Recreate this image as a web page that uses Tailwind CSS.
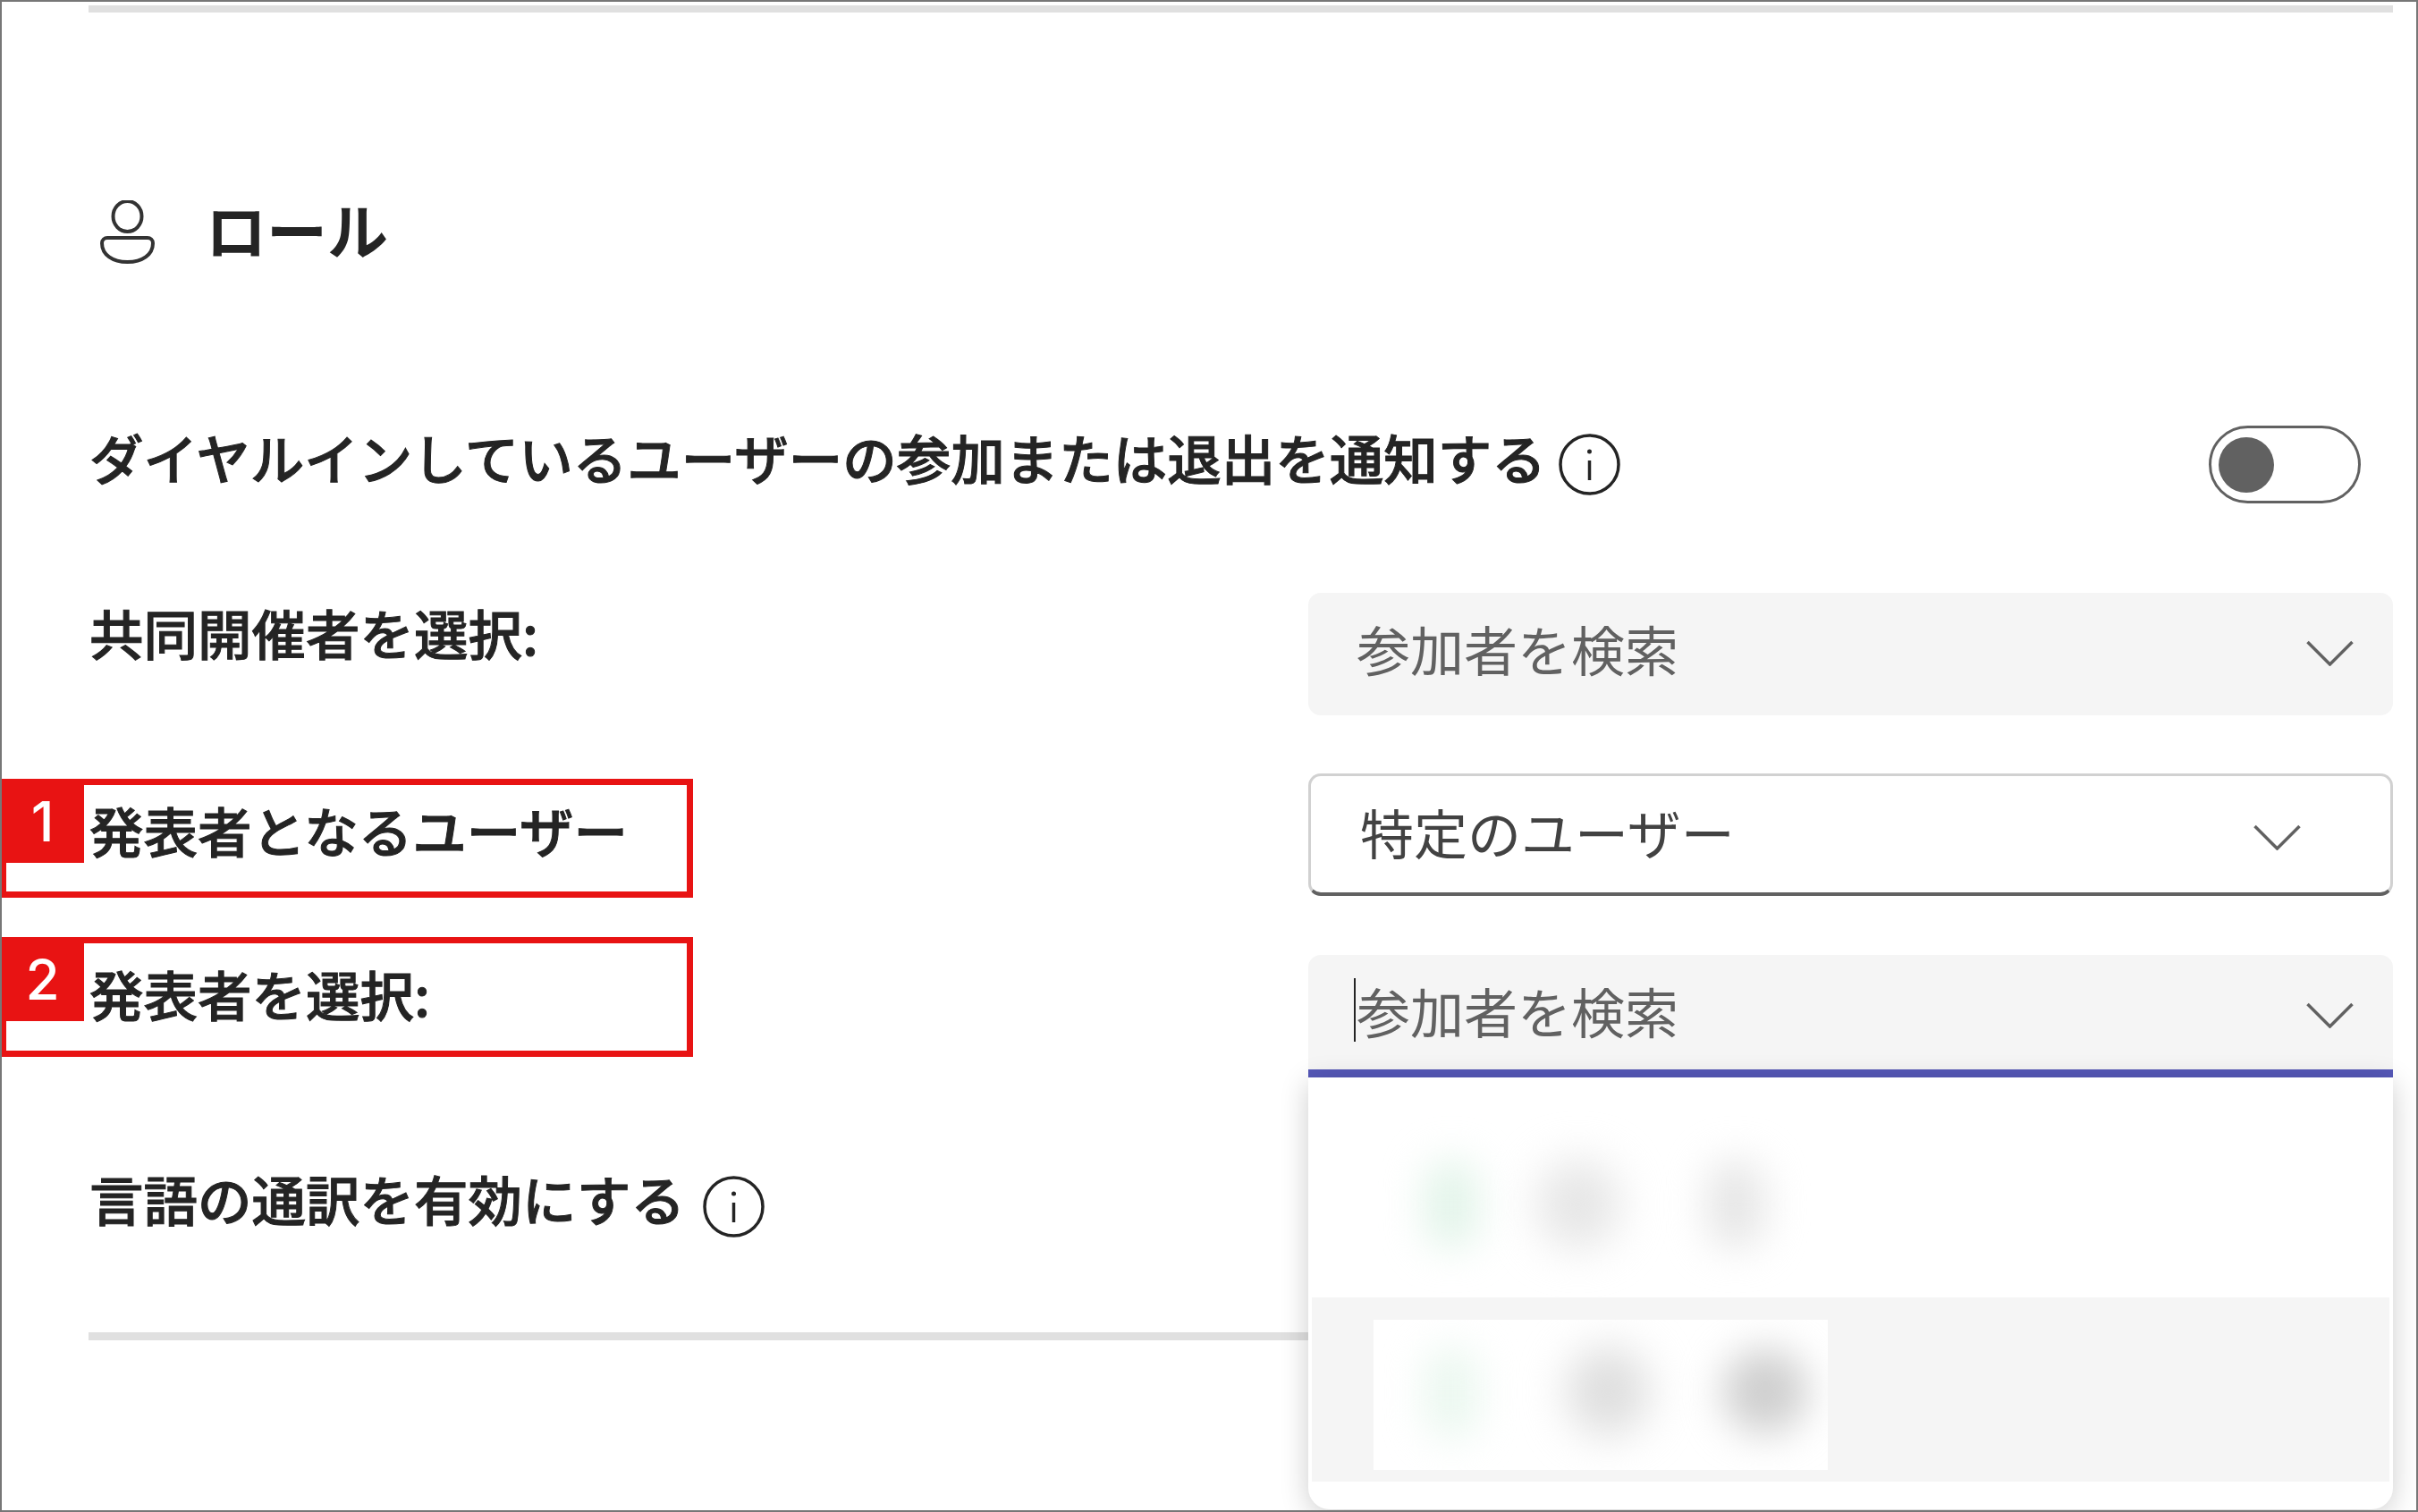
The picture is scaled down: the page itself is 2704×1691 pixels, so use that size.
<!DOCTYPE html>
<html lang="ja">
<head>
<meta charset="UTF-8">
<title>ロール</title>
<script src="https://cdn.jsdelivr.net/npm/@tailwindcss/browser@4"></script>
</head>
<body class="bg-white font-['Noto_Sans_CJK_JP','Noto_Sans',sans-serif]">
<div class="relative w-[2704px] h-[1691px] border-2 border-[#777777] overflow-hidden text-[#242424]">

  <!-- red callouts -->
  <div class="absolute z-20 left-[-2px] top-[869px] w-[775px] h-[133px] border-[7px] border-[#e81313]">
    <div class="w-[87px] h-[87px] bg-[#e81313] text-white text-[62px] font-['Inter'] font-medium leading-[82px] text-center pr-[6px]">1</div>
  </div>
  <div class="absolute z-20 left-[-2px] top-[1046px] w-[775px] h-[134px] border-[7px] border-[#e81313]">
    <div class="w-[87px] h-[87px] bg-[#e81313] text-white text-[62px] font-['Inter'] font-medium leading-[82px] text-center pr-[6px]">2</div>
  </div>

  <div class="pl-[97px] pr-[26px] pt-1">
    <div class="h-2 bg-[#e0e0e0]"></div>

    <div class="flex items-center mt-[210px] h-[71px] ml-[13px]">
      <svg class="w-[61px] h-[71px]" viewBox="0 0 61 71" fill="none" stroke="#333333" stroke-width="4">
        <ellipse cx="30.500" cy="18" rx="16" ry="17"/>
        <path d="M8 42H53a6 6 0 0 1 6 6C59 61 47 69 30.500 69S2 61 2 48a6 6 0 0 1 6-6Z"/>
      </svg>
      <h2 class="ml-[57px] pb-[8px] text-[68px] leading-none font-bold">ロール</h2>
    </div>

    <div class="flex items-center justify-between mt-[181px] h-[87px] pr-[36px]">
      <div class="flex items-center ml-[1px]">
        <span class="pb-[17px] text-[60.5px] leading-none font-medium whitespace-nowrap [-webkit-text-stroke:1px_#242424]">ダイヤルインしているユーザーの参加または退出を通知する</span>
        <svg class="w-[69px] h-[69px] ml-[14px]" viewBox="0 0 69 69" fill="none" stroke="#242424" stroke-width="3.5">
          <circle cx="34.500" cy="34.500" r="32.500"/>
          <path d="M34.500 30V52"/>
          <circle cx="34.500" cy="20" r="2.500" fill="#242424" stroke="none"/>
        </svg>
      </div>
      <div class="w-[170px] h-[87px] border-[3px] border-[#616161] rounded-full flex items-center pl-[8px]">
        <div class="w-[62px] h-[62px] rounded-full bg-[#616161]"></div>
      </div>
    </div>

    <div class="flex justify-between mt-[100px] h-[137px]">
      <span class="ml-[1px] text-[60.5px] leading-none font-medium pt-[14px] [-webkit-text-stroke:1px_#242424]">共同開催者を選択:</span>
      <div class="w-[1213px] h-[137px] bg-[#f5f5f5] rounded-[14px] flex items-center justify-between pl-[54px] pr-[44px] text-[60px] leading-none text-[#616161]">
        <span class="pb-[14px]">参加者を検索</span>
        <svg class="w-[53px] h-[29px] mb-[2px]" viewBox="0 0 53 29" fill="none" stroke="#616161" stroke-width="3.500"><path d="M1.500 2 26.500 27 51.500 2"/></svg>
      </div>
    </div>

    <div class="flex items-center justify-between mt-[65px] h-[137px]">
      <span class="ml-[1px] text-[60.5px] leading-none font-medium pb-[10px] [-webkit-text-stroke:1px_#242424]">発表者となるユーザー</span>
      <div class="w-[1213px] h-[137px] bg-white rounded-[14px] border-[3px] border-[#d1d1d1] border-b-[#616161] border-b-4 flex items-center justify-between pl-[55px] pr-[100px] text-[60px] leading-none text-[#424242]">
        <span class="pb-[6px]">特定のユーザー</span>
        <svg class="w-[53px] h-[29px] mt-[6px]" viewBox="0 0 53 29" fill="none" stroke="#616161" stroke-width="3.500"><path d="M1.500 2 26.500 27 51.500 2"/></svg>
      </div>
    </div>

    <div class="flex justify-between mt-[66px] h-[137px]">
      <span class="ml-[1px] text-[60.5px] leading-none font-medium pt-[13px] [-webkit-text-stroke:1px_#242424]">発表者を選択:</span>
      <div class="relative w-[1213px] h-[137px] z-10">
        <div class="h-[128px] bg-[#f5f5f5] rounded-t-[14px] flex items-center justify-between pl-[54px] pr-[44px] text-[60px] leading-none text-[#616161]">
          <span class="relative pb-[4px]">
            <span class="absolute left-[-3px] top-[-6px] w-[2px] h-[71px] bg-[#242424]"></span>参加者を検索
          </span>
          <svg class="w-[53px] h-[29px] mt-[6px]" viewBox="0 0 53 29" fill="none" stroke="#616161" stroke-width="3.500"><path d="M1.500 2 26.500 27 51.500 2"/></svg>
        </div>
        <div class="h-[9px] bg-[#5558b8]"></div>

        <!-- suggestion list, names blurred out -->
        <div class="absolute left-0 top-[137px] w-[1213px] h-[483px] bg-white rounded-b-[24px] shadow-[0_6px_32px_rgba(0,0,0,0.2)] overflow-hidden">
          <div class="relative h-[246px]">
            <div class="absolute left-[130px] top-[92px] w-[60px] h-[100px] rounded-full bg-[#e2f4e9] blur-[22px]"></div>
            <div class="absolute left-[256px] top-[92px] w-[92px] h-[100px] rounded-full bg-[#e6e6e6] blur-[24px]"></div>
            <div class="absolute left-[446px] top-[92px] w-[64px] h-[100px] rounded-full bg-[#e6e6e6] blur-[22px]"></div>
          </div>
          <div class="mx-[4px] h-[206px] bg-[#f5f5f5] pt-[25px] pl-[69px]">
            <div class="relative w-[508px] h-[168px] bg-white overflow-hidden">
              <div class="absolute left-[58px] top-[30px] w-[58px] h-[104px] rounded-full bg-[#eaf7ef] blur-[22px]"></div>
              <div class="absolute left-[216px] top-[30px] w-[92px] h-[100px] rounded-full bg-[#dedede] blur-[24px]"></div>
              <div class="absolute left-[390px] top-[32px] w-[96px] h-[96px] rounded-full bg-[#cfcfcf] blur-[22px]"></div>
            </div>
          </div>
        </div>
      </div>
    </div>

    <div class="flex items-center mt-[110px] h-[69px] ml-[1px]">
      <span class="pb-[18px] text-[60.5px] leading-none font-medium whitespace-nowrap [-webkit-text-stroke:1px_#242424]">言語の通訳を有効にする</span>
      <svg class="w-[69px] h-[69px] ml-[20px]" viewBox="0 0 69 69" fill="none" stroke="#242424" stroke-width="3.5">
        <circle cx="34.500" cy="34.500" r="32.500"/>
        <path d="M34.500 30V52"/>
        <circle cx="34.500" cy="20" r="2.500" fill="#242424" stroke="none"/>
      </svg>
    </div>

    <div class="h-[9px] bg-[#e0e0e0] mt-[106px]"></div>
  </div>
</div>
</body>
</html>
